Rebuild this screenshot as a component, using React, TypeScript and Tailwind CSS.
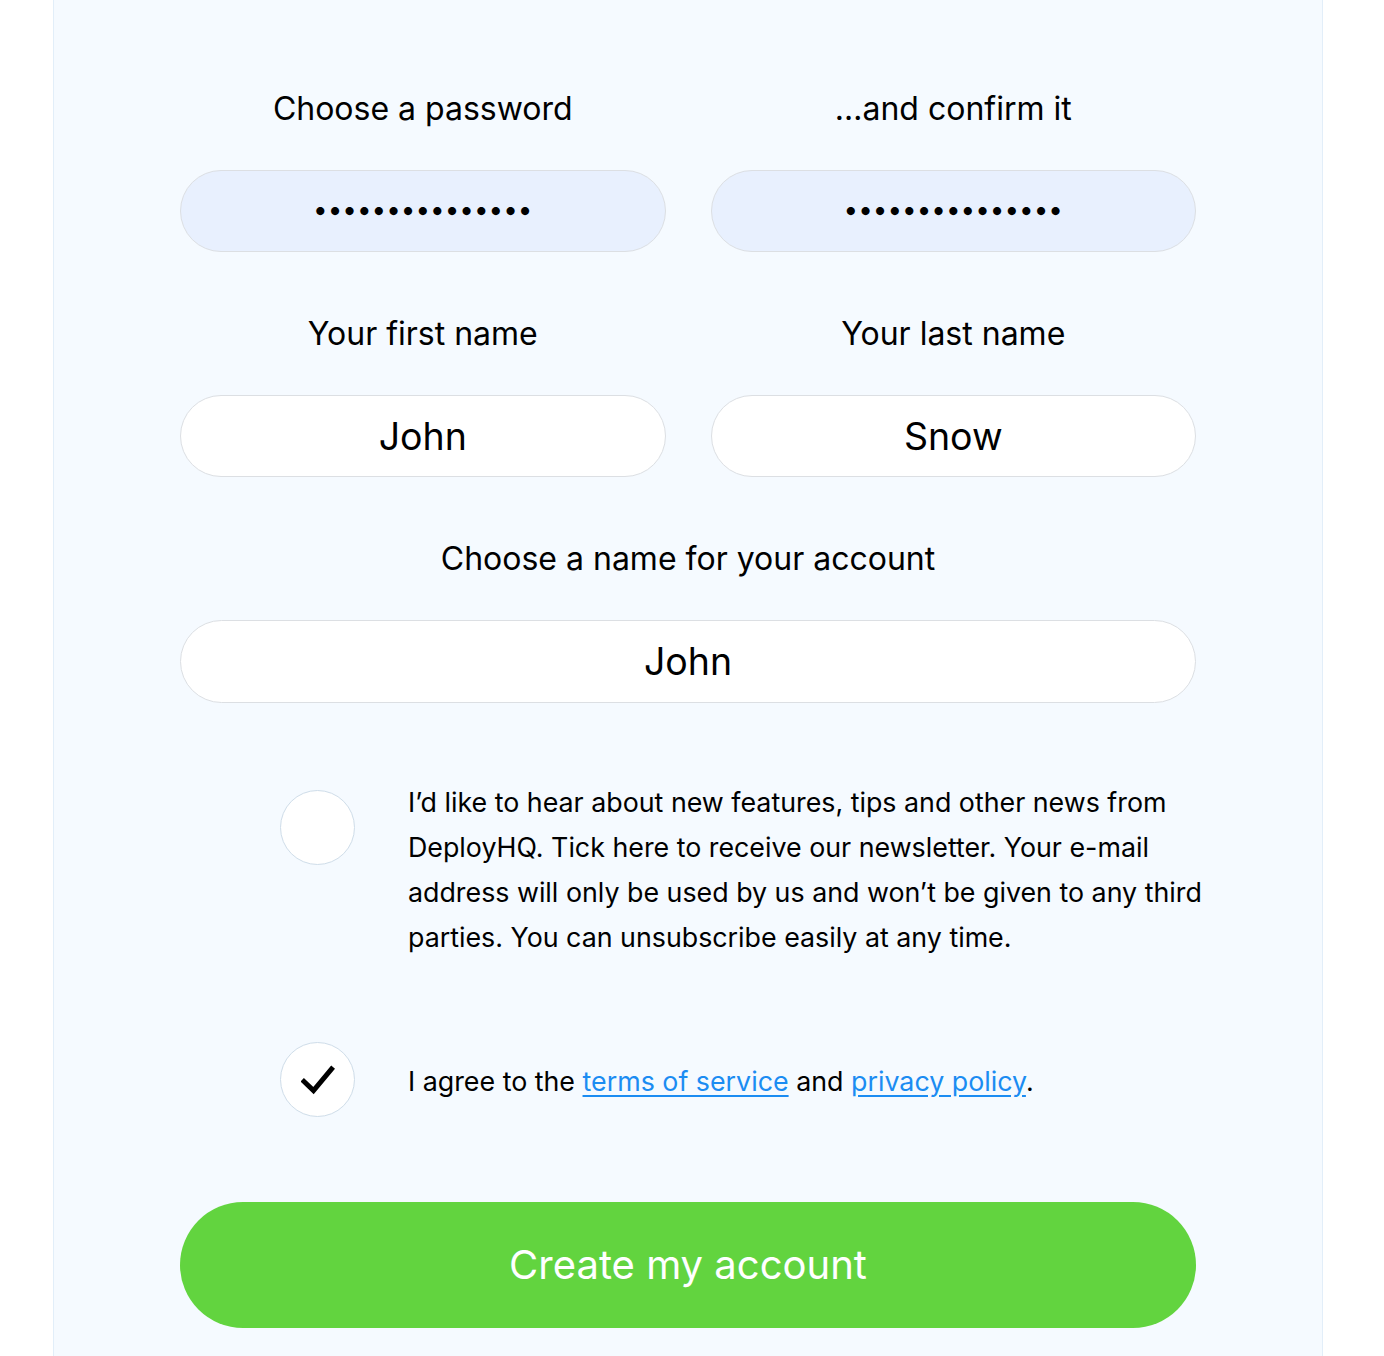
import { useState } from "react";

function Field({ value, type = "text", autofill = false }: { value: string; type?: string; autofill?: boolean }) {
  return (
    <input
      type={type}
      defaultValue={value}
      className={
        "w-full h-[82px] rounded-full border border-[#dcdfe3] text-center text-black outline-none " +
        (autofill ? "bg-[#e8f0fe] text-[26px] pb-[4px]" : "bg-white text-[37.5px]")
      }
    />
  );
}

function Label({ children }: { children: React.ReactNode }) {
  return <p className="text-center text-[32px] leading-[36px] text-black mb-[43px]">{children}</p>;
}

function Circle({ checked, onClick }: { checked: boolean; onClick: () => void }) {
  return (
    <button
      onClick={onClick}
      className="w-[75px] h-[75px] shrink-0 rounded-full bg-white border border-[#cfdde9] flex items-center justify-center"
    >
      {checked && (
        <svg width="34" height="30" viewBox="0 0 34 30" fill="none">
          <path d="M3 16.5 L12.5 25.5 L30.5 4" stroke="black" strokeWidth="5" strokeLinecap="square" />
        </svg>
      )}
    </button>
  );
}

export default function App() {
  const [newsletter, setNewsletter] = useState(false);
  const [terms, setTerms] = useState(true);

  return (
    <div className="min-h-screen bg-white" style={{ fontFamily: "Inter, 'Noto Sans', sans-serif" }}>
      <div className="ml-[53px] w-[1270px] bg-[#f5faff] border-x border-[#e2eef9] px-[126px] pt-[91px] pb-[28px]">
        {/* Password row */}
        <div className="grid grid-cols-2 gap-[45px]">
          <div>
            <Label>Choose a password</Label>
            <Field type="password" value="secretpassword1" autofill />
          </div>
          <div>
            <Label>…and confirm it</Label>
            <Field type="password" value="secretpassword1" autofill />
          </div>
        </div>

        {/* Names */}
        <div className="grid grid-cols-2 gap-[45px] mt-[64px]">
          <div>
            <Label>Your first name</Label>
            <Field value="John" />
          </div>
          <div>
            <Label>Your last name</Label>
            <Field value="Snow" />
          </div>
        </div>

        {/* Account */}
        <div className="mt-[64px]">
          <Label>Choose a name for your account</Label>
          <input
            defaultValue="John"
            className="w-full h-[83px] rounded-full border border-[#dcdfe3] bg-white text-center text-[37.5px] text-black outline-none"
          />
        </div>

        {/* Newsletter */}
        <div className="flex items-start gap-[53px] pl-[100px] mt-[77px]">
          <div className="pt-[10px]">
            <Circle checked={newsletter} onClick={() => setNewsletter(!newsletter)} />
          </div>
          <p className="text-[26.8px] leading-[45px] text-black whitespace-nowrap">
            I’d like to hear about new features, tips and other news from
            <br />
            DeployHQ. Tick here to receive our newsletter. Your e-mail
            <br />
            address will only be used by us and won’t be given to any third
            <br />
            parties. You can unsubscribe easily at any time.
          </p>
        </div>

        {/* Terms */}
        <div className="flex items-center gap-[53px] pl-[100px] mt-[82px]">
          <Circle checked={terms} onClick={() => setTerms(!terms)} />
          <p className="text-[26.8px] leading-[45px] text-black pt-[3px]">
            I agree to the{" "}
            <a href="#" className="text-[#1b8cf2] underline underline-offset-4">terms of service</a>{" "}
            and{" "}
            <a href="#" className="text-[#1b8cf2] underline underline-offset-4">privacy policy</a>.
          </p>
        </div>

        <button className="w-full h-[126px] mt-[85px] rounded-full bg-[#62d43f] text-white text-[40px]">
          Create my account
        </button>
      </div>
    </div>
  );
}
